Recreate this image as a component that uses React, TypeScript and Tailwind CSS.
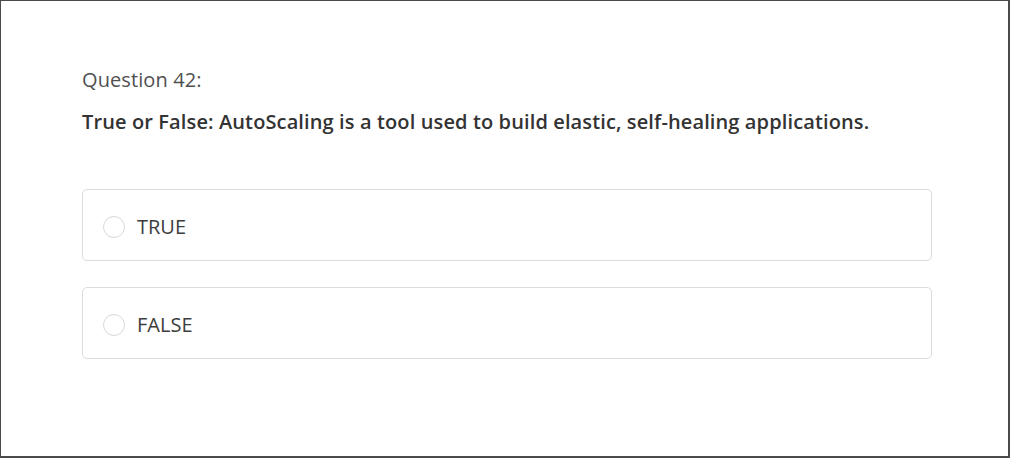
import React, { useState } from 'react';

const options = ['TRUE', 'FALSE'];

export default function App() {
  const [picked, setPicked] = useState<string | null>(null);

  return (
    <div className="w-[1010px] h-[458px] bg-white border border-[#4a4a4a] border-r-2 border-b-2" style={{ fontFamily: '"Open Sans", sans-serif' }}>
      <div className="pl-[81px] pr-[76px] pt-[64px]">
        <div className="text-[20px] leading-[30px] text-[#505050] tracking-[0.1px]">Question 42:</div>
        <div className="mt-[12px] text-[20px] leading-[30px] font-semibold text-[#333] tracking-[0.12px]">
          True or False: AutoScaling is a tool used to build elastic, self-healing applications.
        </div>
        <div className="mt-[52px] flex flex-col gap-[26px]">
          {options.map(opt => (
            <label
              key={opt}
              className="flex items-center h-[72px] pl-[20px] pt-[3px] border border-[#dcdcdc] rounded-[5px] cursor-pointer"
              onClick={() => setPicked(opt)}
            >
              <span className="w-[22px] h-[22px] rounded-full border border-[#d8d8d8] flex items-center justify-center">
                {picked === opt && <span className="w-[10px] h-[10px] rounded-full bg-[#555]" />}
              </span>
              <span className="ml-[12px] text-[20px] text-[#3d3d3d]">{opt}</span>
            </label>
          ))}
        </div>
      </div>
    </div>
  );
}
